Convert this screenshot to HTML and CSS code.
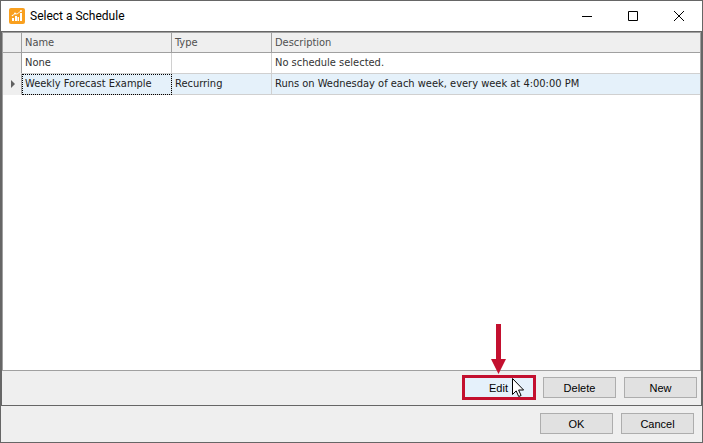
FILE: index.html
```html
<!DOCTYPE html>
<html lang="en">
<head>
    <meta charset="utf-8">
    <meta name="viewport" content="width=device-width, initial-scale=1">
    <title>Select a Schedule</title>
    <link rel="stylesheet" href="styles.css">
</head>
<body>
    <div class="window">
        <div class="titlebar">
            <svg class="app-icon" viewBox="0 0 16 16" aria-hidden="true">
                <rect width="16" height="16" rx="2" fill="#f9a01f"/>
                <path d="M3 10h2v3H3zM6 8h2v5H6zM8.500 9h1.500v4H8.500zM11 5h2v8h-2z" fill="#fff"/>
                <path d="M3.500 7.500l2.500-2 2 .5 4-3" fill="none" stroke="#fff" stroke-width=".8"/>
                <circle cx="12" cy="3" r="1" fill="#fff"/>
                <circle cx="6" cy="5.500" r=".9" fill="#fff"/>
                <circle cx="3.500" cy="7.500" r=".8" fill="#fff"/>
            </svg>
            <h1 class="title">Select a Schedule</h1>
            <div class="controls">
                <button type="button" aria-label="Minimize"><svg viewBox="0 0 10 10"><path d="M0 5.5h10"/></svg></button>
                <button type="button" aria-label="Maximize"><svg viewBox="0 0 10 10"><path d="M.5.5h9v9h-9z"/></svg></button>
                <button type="button" aria-label="Close"><svg viewBox="0 0 10 10"><path d="M0 0l10 10M10 0L0 10"/></svg></button>
            </div>
        </div>

        <div class="panel">
            <div class="grid">
                <table class="schedules">
                    <colgroup>
                        <col class="col-mark">
                        <col class="col-name">
                        <col class="col-type">
                        <col>
                    </colgroup>
                    <thead>
                        <tr>
                            <td class="mark"></td>
                            <th>Name</th>
                            <th>Type</th>
                            <th>Description</th>
                        </tr>
                    </thead>
                    <tbody>
                        <tr>
                            <td class="mark"></td>
                            <td>None</td>
                            <td></td>
                            <td>No schedule selected.</td>
                        </tr>
                        <tr class="selected">
                            <td class="mark"><svg viewBox="0 0 4 8" aria-hidden="true"><path d="M0 0l4 4-4 4z"/></svg></td>
                            <td class="focused">Weekly Forecast Example</td>
                            <td>Recurring</td>
                            <td>Runs on Wednesday of each week, every week at 4:00:00 PM</td>
                        </tr>
                    </tbody>
                </table>
            </div>
            <div class="actions">
                <div class="callout">
                    <button type="button" class="btn hover">Edit</button>
                    <svg class="arrow" viewBox="0 0 15 50" aria-hidden="true"><path d="M5 0h5v35h5L7.500 50 0 35h5z"/></svg>
                    <svg class="cursor" viewBox="0 0 12 19" aria-hidden="true"><path d="M.5.5v16l3.700-3.600 2.500 5.600 2.400-1-2.500-5.500h5z"/></svg>
                </div>
                <button type="button" class="btn">Delete</button>
                <button type="button" class="btn">New</button>
            </div>
        </div>

        <div class="footer">
            <button type="button" class="btn">OK</button>
            <button type="button" class="btn">Cancel</button>
        </div>
    </div>
</body>
</html>
```

FILE: styles.css
```css
* {
    margin: 0;
    padding: 0;
    box-sizing: border-box;
}
body {
    background: #efefef;
    color: #000;
    font-family: "Liberation Sans", Arial, sans-serif;
    font-size: 11px;
}
.window {
    display: flex;
    flex-direction: column;
    min-height: 100vh;
    border: 1px solid #666;
}

/* title bar */
.titlebar {
    display: flex;
    align-items: center;
    height: 30px;
    padding-left: 8px;
    background: #fff;
}
.app-icon {
    width: 16px;
    height: 16px;
    margin-right: 5px;
}
.title {
    flex: 1;
    font-family: Roboto, "Open Sans", sans-serif;
    font-size: 12px;
    font-weight: 400;
}
.controls {
    display: flex;
}
.controls button {
    display: flex;
    align-items: center;
    justify-content: center;
    width: 46px;
    height: 28px;
    border: 0;
    background: none;
}
.controls svg {
    width: 10px;
    height: 10px;
    fill: none;
    stroke: #000;
}

/* schedule list */
.panel {
    flex: 1;
    display: flex;
    flex-direction: column;
    border: 1px solid #666;
}
.grid {
    flex: 1;
    background: #fff;
    border: 1px solid #a0a0a0;
}
.schedules {
    width: 100%;
    table-layout: fixed;
    border-collapse: separate;
    border-spacing: 0;
    font-family: "DejaVu Sans Condensed", "Noto Sans", sans-serif;
    font-size: 11px;
    line-height: 20px;
    color: #333;
}
.col-mark {
    width: 19px;
}
.col-name {
    width: 150px;
}
.col-type {
    width: 100px;
}
.schedules th,
.schedules td {
    height: 21px;
    padding: 0 3px;
    border-right: 1px solid #d0d0d0;
    border-bottom: 1px solid #d0d0d0;
    font-weight: 400;
    text-align: left;
    white-space: nowrap;
}
.schedules th:last-child,
.schedules td:last-child {
    border-right: 0;
}
.schedules thead th,
.schedules thead td {
    height: 20px;
    line-height: 18px;
    background: #efefef;
    border-color: #a0a0a0;
    color: #505050;
}
.schedules .mark {
    padding: 0;
    background: #efefef;
    border-right-color: #a0a0a0;
}
.schedules tbody .mark {
    border-bottom-color: #efefef;
}
.mark svg {
    display: block;
    width: 4px;
    height: 8px;
    margin-left: 8px;
    fill: #606060;
}
.selected td {
    background: #e5f1fa;
    color: #222;
}
.selected .focused {
    outline: 1px dotted #000;
    outline-offset: -1px;
}

/* buttons */
.actions,
.footer {
    display: flex;
    justify-content: flex-end;
    gap: 8px;
}
.actions {
    padding: 6px 4px 7px;
}
.footer {
    padding: 7px 8px 8px;
}
.btn {
    width: 73px;
    height: 21px;
    padding-top: 1px;
    border: 1px solid #adadad;
    background: #e1e1e1;
    color: #000;
    font-family: inherit;
    font-size: 11px;
    line-height: 18px;
}
.btn.hover {
    background: #e5f1fb;
}

/* tutorial marks over the Edit button */
.callout {
    position: relative;
    display: flex;
}
.callout::after {
    content: "";
    position: absolute;
    inset: -2px -1px -2px 0;
    border: 3px solid #c3102f;
}
.arrow {
    position: absolute;
    bottom: 24px;
    left: 29px;
    width: 15px;
    height: 50px;
    fill: #c3102f;
}
.cursor {
    position: absolute;
    z-index: 1;
    top: 1px;
    left: 50px;
    width: 12px;
    height: 19px;
    fill: #fff;
    stroke: #000;
}
```
